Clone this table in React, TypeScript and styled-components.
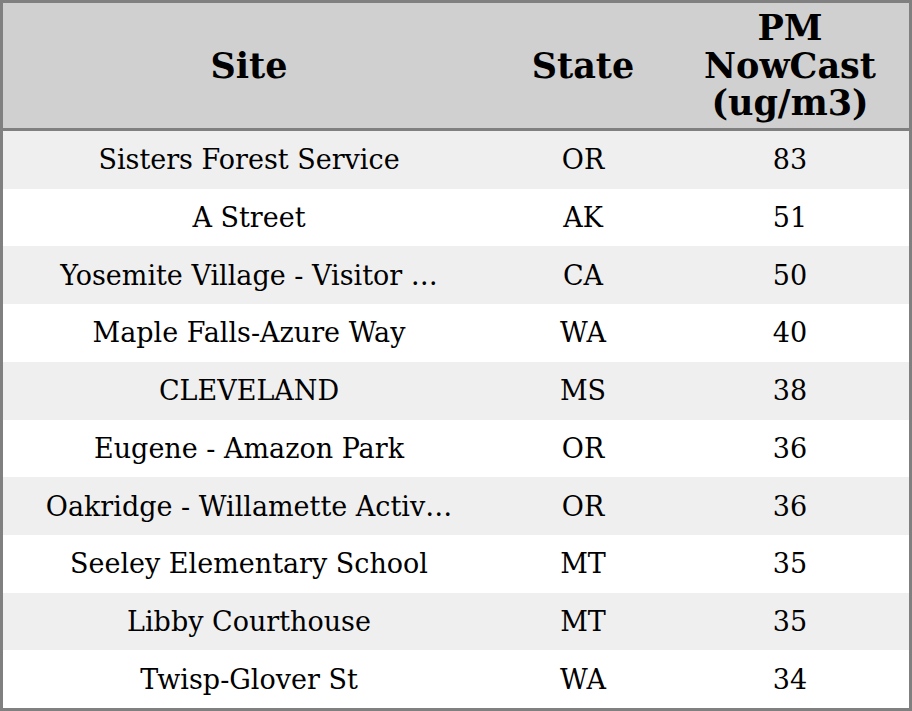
import React from "react";
import styled, { createGlobalStyle } from "styled-components";

interface SiteRow {
  site: string;
  state: string;
  value: number;
}

const rows: SiteRow[] = [
  { site: "Sisters Forest Service", state: "OR", value: 83 },
  { site: "A Street", state: "AK", value: 51 },
  { site: "Yosemite Village - Visitor Center", state: "CA", value: 50 },
  { site: "Maple Falls-Azure Way", state: "WA", value: 40 },
  { site: "CLEVELAND", state: "MS", value: 38 },
  { site: "Eugene - Amazon Park", state: "OR", value: 36 },
  { site: "Oakridge - Willamette Activity Center", state: "OR", value: 36 },
  { site: "Seeley Elementary School", state: "MT", value: 35 },
  { site: "Libby Courthouse", state: "MT", value: 35 },
  { site: "Twisp-Glover St", state: "WA", value: 34 },
];

const MAX_SITE_LENGTH = 30;

const shorten = (name: string) =>
  name.length > MAX_SITE_LENGTH ? name.slice(0, 27) + "…" : name;

const GlobalStyle = createGlobalStyle`
  html, body {
    margin: 0;
    padding: 0;
    background: #ffffff;
  }
  body {
    font-family: "DejaVu Serif", "Liberation Serif", serif;
  }
`;

const App: React.FC = () => {
  return (
    <>
      <GlobalStyle />
      <Table>
        <HeaderCell>Site</HeaderCell>
        <HeaderCell>State</HeaderCell>
        <HeaderCell>
          PM
          <br />
          NowCast
          <br />
          (ug/m3)
        </HeaderCell>
        {rows.map((row, index) => (
          <React.Fragment key={row.site}>
            <Cell striped={index % 2 === 0}>{shorten(row.site)}</Cell>
            <Cell striped={index % 2 === 0}>{row.state}</Cell>
            <Cell striped={index % 2 === 0}>{row.value}</Cell>
          </React.Fragment>
        ))}
      </Table>
    </>
  );
};

export default App;

const Table = styled.div`
  box-sizing: border-box;
  width: 912px;
  height: 711px;
  border: 3px solid #808080;
  display: grid;
  grid-template-columns: 492px 176px 1fr;
  grid-template-rows: 128px repeat(10, 1fr);
`;

const HeaderCell = styled.div`
  display: flex;
  align-items: center;
  justify-content: center;
  text-align: center;
  background: #d0d0d0;
  border-bottom: 3px solid #808080;
  font-weight: bold;
  font-size: 35px;
  line-height: 37.5px;
  color: #000;
`;

const Cell = styled.div<{ striped: boolean }>`
  display: flex;
  align-items: center;
  justify-content: center;
  white-space: nowrap;
  background: ${(props) => (props.striped ? "#efefef" : "#ffffff")};
  font-size: 27px;
  color: #000;
`;
